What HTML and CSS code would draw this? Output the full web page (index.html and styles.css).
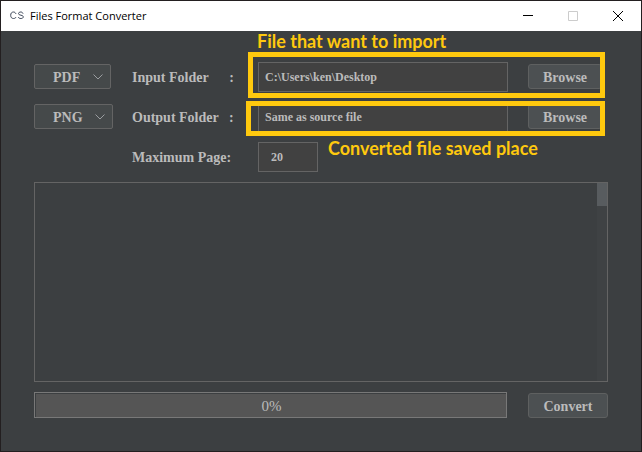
FILE: index.html
```html
<!DOCTYPE html>
<html lang="en">
<head>
<meta charset="utf-8">
<title>Files Format Converter</title>
<link rel="stylesheet" href="styles.css">
</head>
<body>
<div class="window">
  <header class="titlebar">
    <svg class="app-icon" width="14" height="10" viewBox="0 0 14 10" aria-hidden="true">
      <path d="M6 3C5.500 1.800 4.700 1 3.600 1 1.700 1 .700 2.200 .700 4.300S1.700 7.500 3.600 7.500C4.800 7.500 5.600 7 6 6M13 2.700C12.600 1.500 11.900 1 10.800 1 9.500 1 8.500 1.600 8.500 2.600 8.500 4.800 13.300 3.600 13.300 5.800 13.300 7 12.200 7.500 10.900 7.500 9.600 7.500 8.600 7.100 8.300 6"/>
    </svg>
    <h1 class="title">Files Format Converter</h1>
    <div class="controls">
      <button class="control" type="button" aria-label="Minimize"><svg width="10" height="10" viewBox="0 0 10 10"><path d="M0 4.500H10"/></svg></button>
      <button class="control" type="button" aria-label="Maximize" disabled><svg width="10" height="10" viewBox="0 0 10 10"><path d="M.5 .5H9.500V9.500H.5Z"/></svg></button>
      <button class="control" type="button" aria-label="Close"><svg width="10" height="10" viewBox="0 0 10 10"><path d="M0 0L10 10M10 0L0 10"/></svg></button>
    </div>
  </header>
  <main class="panel">
    <form class="form">
      <div class="picker">
        <select class="select" aria-label="Input format"><option>PDF</option></select>
        <svg class="chevron" width="10" height="6" viewBox="0 0 10 6"><path d="M.5 .5L5 5L9.500 .5"/></svg>
      </div>
      <label class="label" for="input-folder">Input Folder      :</label>
      <input class="field" id="input-folder" type="text" value="C:\Users\ken\Desktop">
      <button class="button" type="button">Browse</button>

      <div class="picker">
        <select class="select" aria-label="Output format"><option>PNG</option></select>
        <svg class="chevron" width="10" height="6" viewBox="0 0 10 6"><path d="M.5 .5L5 5L9.500 .5"/></svg>
      </div>
      <label class="label" for="output-folder">Output Folder   :</label>
      <input class="field" id="output-folder" type="text" value="Same as source file">
      <button class="button" type="button">Browse</button>

      <label class="label label-pages" for="max-page">Maximum Page:</label>
      <input class="field field-small" id="max-page" type="text" value="20">
    </form>
    <div class="log">
      <textarea class="log-text" aria-label="Log" readonly></textarea>
      <div class="track"><div class="thumb"></div></div>
    </div>
    <div class="footer">
      <div class="progress" role="progressbar" aria-label="Conversion" aria-valuenow="0" aria-valuemin="0" aria-valuemax="100">0%</div>
      <button class="button button-wide" type="button">Convert</button>
    </div>
    <p class="note note-input">File that want to import</p>
    <div class="frame frame-input"></div>
    <div class="frame frame-output"></div>
    <p class="note note-output">Converted file saved place</p>
  </main>
</div>
</body>
</html>
```
FILE: styles.css
```css
* { box-sizing: border-box; }

body {
  margin: 0;
  background: #3c3f41;
  color: #bbbbbb;
  font: bold 14px/18px "Liberation Serif", serif;
}

.window {
  display: flex;
  flex-direction: column;
  min-height: 100vh;
  border: 1px solid #231f20;
}

.titlebar {
  display: flex;
  align-items: center;
  height: 30px;
  padding-left: 9px;
  background: #ffffff;
  color: #000000;
}

.app-icon {
  fill: none;
  stroke: #3c4658;
  stroke-width: 1;
}

.title {
  margin: 0 0 0 6px;
  font: 11px/16px "Open Sans", sans-serif;
}

.controls {
  display: flex;
  margin-left: auto;
  padding-right: 1px;
}

.control {
  display: flex;
  align-items: center;
  justify-content: center;
  width: 45px;
  height: 30px;
  padding: 0;
  border: 0;
  background: none;
}

.control svg {
  fill: none;
  stroke: #000000;
}

.control:disabled svg { stroke: #cccccc; }

.panel {
  position: relative;
  flex: 1;
  display: flex;
  flex-direction: column;
  gap: 10px;
  padding: 31px 33px 33px;
}

.form {
  display: grid;
  grid-template-columns: 98px 126px 1fr 80px;
  grid-auto-rows: 30px;
  row-gap: 10px;
  align-items: center;
}

.form .picker,
.form .button { margin-bottom: 1px; }

.picker {
  position: relative;
  justify-self: start;
}

.select {
  display: block;
  height: 25px;
  padding: 2px 29px 0 18px;
  appearance: none;
  border: 1px solid #646464;
  border-radius: 2px;
  background: #45494a;
  color: inherit;
  font: inherit;
}

.chevron {
  position: absolute;
  right: 8px;
  top: 10px;
  fill: none;
  stroke: #9a9da0;
  pointer-events: none;
}

.label {
  padding-top: 2px;
  white-space: pre;
}

.label-pages { grid-column: 2; }

.field {
  width: calc(100% - 20px);
  height: 30px;
  padding: 0 6px;
  border: 1px solid #646464;
  background: #414141;
  color: inherit;
  font: inherit;
  font-size: 12px;
}

.field-small {
  width: 60px;
  padding: 0 12px;
}

.button {
  justify-self: start;
  height: 25px;
  padding: 2px 14px 0;
  border: 1px solid #5e6060;
  border-radius: 3px;
  background: #4c5052;
  color: inherit;
  font: inherit;
}

.button-wide { justify-self: stretch; }

.log {
  display: flex;
  height: 200px;
  border: 1px solid #646464;
}

.log-text {
  flex: 1;
  padding: 6px;
  border: 0;
  resize: none;
  background: none;
  color: inherit;
  font: inherit;
}

.track {
  width: 10px;
  background: #3f4244;
}

.thumb {
  height: 23px;
  background: #585c5f;
}

.footer {
  display: grid;
  grid-template-columns: 1fr 80px;
  column-gap: 21px;
  align-items: end;
}

.progress {
  height: 26px;
  padding-left: 2px;
  border: 1px solid #787878;
  background: #555555;
  box-shadow: inset 1px 1px #3c3f41;
  font-size: 15px;
  font-weight: normal;
  line-height: 26px;
  text-align: center;
}

.note {
  position: absolute;
  margin: 0;
  color: #ffc90e;
  font: bold 18px/20px Lato, sans-serif;
}

.note-input { left: 256px; top: 0; }
.note-output { left: 327px; top: 107px; }

.frame {
  position: absolute;
  right: 36px;
  border: 5px solid #ffc90e;
  pointer-events: none;
}

.frame-input {
  left: 247px;
  top: 21px;
  height: 46px;
}

.frame-output {
  left: 245px;
  top: 70px;
  height: 35px;
}
```
